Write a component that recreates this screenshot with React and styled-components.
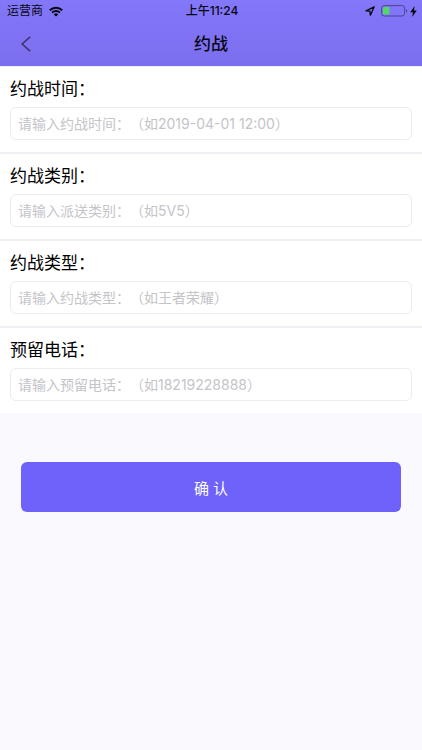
import { useState } from "react";
import styled, { createGlobalStyle } from "styled-components";

const FONT = `Inter, "Noto Sans CJK SC", sans-serif`;

const COLOR = {
  PURPLE: "#6e62fb",
  DARK: "#08080f",
  LINE: "#efeff4",
  BORDER: "#ececee",
  HINT: "#c4c4c9",
  PAGE: "#f9f9fe",
};

const FIELDS = [
  { name: "time", label: "约战时间：", hint: "请输入约战时间：（如2019-04-01 12:00）" },
  { name: "category", label: "约战类别：", hint: "请输入派送类别：（如5V5）" },
  { name: "type", label: "约战类型：", hint: "请输入约战类型：（如王者荣耀）" },
  { name: "phone", label: "预留电话：", hint: "请输入预留电话：（如18219228888）" },
];

const StatusBar = () => (
  <StyledStatusBar>
    <StyledCarrier>
      运营商
      <svg width="14" height="11" viewBox="0 0 14 11" fill="none" stroke={COLOR.DARK} strokeWidth="2">
        <path d="M0.8 4.2a8.8 8.8 0 0 1 12.4 0" />
        <path d="M3.1 6.6a5.5 5.5 0 0 1 7.8 0" />
        <path d="M7 10.6 4.8 8.4a3.1 3.1 0 0 1 4.4 0z" fill={COLOR.DARK} stroke="none" />
      </svg>
    </StyledCarrier>
    <StyledClock>上午11:24</StyledClock>
    <StyledIndicators>
      <svg width="10" height="10" viewBox="0 0 10 10" fill="none" stroke={COLOR.DARK} strokeWidth="1.3" strokeLinejoin="round">
        <path d="M9.2 0.8 0.9 4.8 4.8 5.2 5.4 9.2z" />
      </svg>
      <svg width="27" height="12" viewBox="0 0 27 12">
        <rect x="0.6" y="0.6" width="23" height="10.4" rx="2.6" fill="none" stroke="#4d4596" />
        <rect x="2" y="2" width="6.4" height="7.6" rx="1" fill="#4fd964" />
        <path d="M25 4v3.8c1.6-.6 1.6-3.2 0-3.8z" fill="#4d4596" />
      </svg>
      <svg width="7" height="11" viewBox="0 0 7 11" fill={COLOR.DARK}>
        <path d="M4.6 0 .2 6.2h2.7L2.2 11 6.8 4.5H4z" />
      </svg>
    </StyledIndicators>
  </StyledStatusBar>
);

const NavBar = () => (
  <StyledNavBar>
    <StyledBackButton type="button" aria-label="返回">
      <svg width="10" height="16" viewBox="0 0 10 16" fill="none" stroke="#37325f" strokeWidth="1.5">
        <path d="M9.2 .8 1.2 8l8 7.2" />
      </svg>
    </StyledBackButton>
    <StyledTitle>约战</StyledTitle>
  </StyledNavBar>
);

const Field = ({ name, label, hint, value, onChange }) => (
  <StyledField>
    <StyledLabel htmlFor={name}>{label}</StyledLabel>
    <StyledInput
      id={name}
      name={name}
      placeholder={hint}
      value={value}
      onChange={(e) => onChange(name, e.target.value)}
    />
  </StyledField>
);

const App = () => {
  const [values, setValues] = useState({});

  const onFieldChange = (name, value) => {
    setValues({ ...values, [name]: value });
  };

  return (
    <>
      <GlobalStyle />
      <StyledHeader>
        <StatusBar />
        <NavBar />
      </StyledHeader>
      <form onSubmit={(e) => e.preventDefault()}>
        <StyledFields>
          {FIELDS.map((field) => (
            <Field key={field.name} {...field} value={values[field.name] || ""} onChange={onFieldChange} />
          ))}
        </StyledFields>
        <StyledActions>
          <StyledSubmit type="submit">确 认</StyledSubmit>
        </StyledActions>
      </form>
    </>
  );
};

const GlobalStyle = createGlobalStyle`
  * {
    box-sizing: border-box;
  }

  body {
    margin: 0;
    background: ${COLOR.PAGE};
    font-family: ${FONT};
    color: #000;
    text-spacing-trim: space-all;
  }
`;

const StyledHeader = styled.header`
  background: linear-gradient(#8377fa, #7b6eee);
  color: ${COLOR.DARK};
`;

const StyledStatusBar = styled.div`
  display: grid;
  grid-template-columns: 1fr auto 1fr;
  align-items: center;
  height: 22px;
  padding: 0 5px 0 7px;
  font-size: 12px;
  line-height: 22px;
`;

const StyledCarrier = styled.div`
  display: flex;
  align-items: center;
  gap: 6px;
`;

const StyledClock = styled.div`
  font-weight: 500;
`;

const StyledIndicators = styled.div`
  display: flex;
  align-items: center;
  justify-content: flex-end;
  gap: 2px;

  svg:first-child {
    margin-right: 4px;
  }
`;

const StyledNavBar = styled.div`
  display: grid;
  grid-template-columns: 52px 1fr 52px;
  align-items: center;
  height: 44px;
`;

const StyledBackButton = styled.button`
  display: flex;
  align-items: center;
  height: 44px;
  padding: 0 0 0 21px;
  border: 0;
  background: none;
  cursor: pointer;
`;

const StyledTitle = styled.h1`
  margin: 0;
  font-size: 17px;
  font-weight: 500;
  line-height: 24px;
  text-align: center;
`;

const StyledFields = styled.div`
  display: flex;
  flex-direction: column;
  gap: 2px;
  padding-top: 1px;
  background: ${COLOR.LINE};
`;

const StyledField = styled.div`
  display: flex;
  flex-direction: column;
  gap: 6px;
  padding: 10px 10px 12px;
  background: #fff;
`;

const StyledLabel = styled.label`
  font-size: 17px;
  line-height: 24px;
`;

const StyledInput = styled.input`
  width: 100%;
  height: 33px;
  padding: 0 7px;
  border: 1px solid ${COLOR.BORDER};
  border-radius: 6px;
  background: #fff;
  font-family: inherit;
  font-size: 14px;
  text-spacing-trim: inherit;
  outline: none;

  &::placeholder {
    color: ${COLOR.HINT};
    opacity: 1;
  }
`;

const StyledActions = styled.div`
  padding: 49px 21px;
`;

const StyledSubmit = styled.button`
  width: 100%;
  height: 50px;
  border: 0;
  border-radius: 6px;
  background: ${COLOR.PURPLE};
  color: #fff;
  font-family: inherit;
  font-size: 15px;
  cursor: pointer;
`;

export default App;
